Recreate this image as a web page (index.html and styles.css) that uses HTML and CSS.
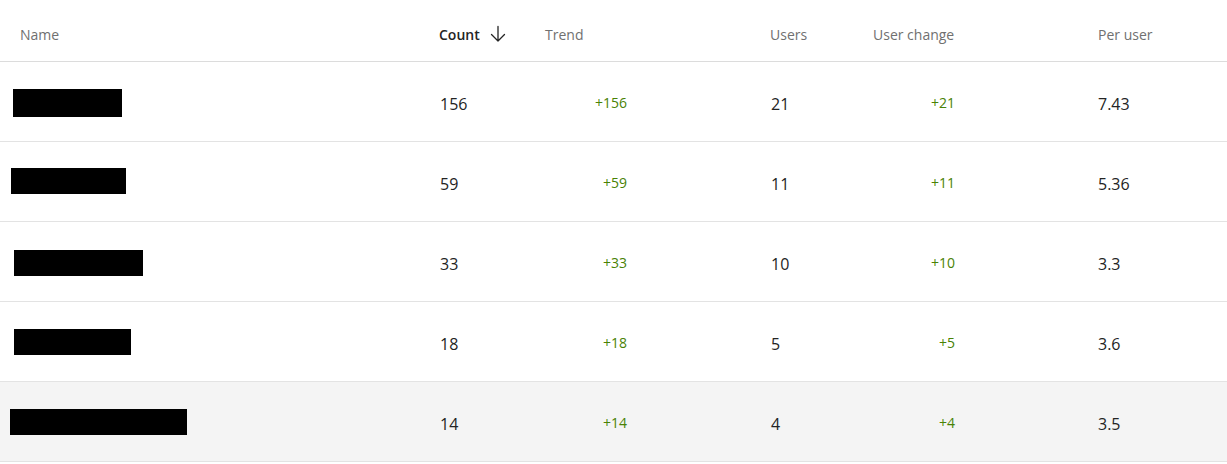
FILE: index.html
```html
<!DOCTYPE html>
<html>
<head>
<meta charset="utf-8">
<link rel="stylesheet" href="styles.css">
</head>
<body>
<div class="table">
  <div class="row header">
    <div class="cell name"><span class="hname">Name</span></div>
    <div class="cell count"><span class="sorted">Count</span>
      <svg class="arrow" width="18" height="18" viewBox="0 0 18 18"><path d="M9 1.5V16M2.5 9.5L9 16l6.5-6.5" fill="none" stroke="#242424" stroke-width="1.3" stroke-linecap="round" stroke-linejoin="round"/></svg>
    </div>
    <div class="cell trend">Trend</div>
    <div class="cell users">Users</div>
    <div class="cell uchange">User change</div>
    <div class="cell per">Per user</div>
  </div>

  <div class="row">
    <div class="cell name"><span class="redact" style="width:109px;height:28px;margin-left:13px"></span></div>
    <div class="cell count">156</div>
    <div class="cell trend"><span class="delta">+156</span></div>
    <div class="cell users">21</div>
    <div class="cell uchange"><span class="delta">+21</span></div>
    <div class="cell per">7.43</div>
  </div>
  <div class="row">
    <div class="cell name"><span class="redact" style="width:115px;margin-left:11px;margin-top:-1px"></span></div>
    <div class="cell count">59</div>
    <div class="cell trend"><span class="delta">+59</span></div>
    <div class="cell users">11</div>
    <div class="cell uchange"><span class="delta">+11</span></div>
    <div class="cell per">5.36</div>
  </div>
  <div class="row">
    <div class="cell name"><span class="redact" style="width:129px;margin-left:14px;margin-top:1px"></span></div>
    <div class="cell count">33</div>
    <div class="cell trend"><span class="delta">+33</span></div>
    <div class="cell users">10</div>
    <div class="cell uchange"><span class="delta">+10</span></div>
    <div class="cell per">3.3</div>
  </div>
  <div class="row">
    <div class="cell name"><span class="redact" style="width:117px;margin-left:14px"></span></div>
    <div class="cell count">18</div>
    <div class="cell trend"><span class="delta">+18</span></div>
    <div class="cell users">5</div>
    <div class="cell uchange"><span class="delta">+5</span></div>
    <div class="cell per">3.6</div>
  </div>
  <div class="row hover">
    <div class="cell name"><span class="redact" style="width:177px;margin-left:10px"></span></div>
    <div class="cell count">14</div>
    <div class="cell trend"><span class="delta">+14</span></div>
    <div class="cell users">4</div>
    <div class="cell uchange"><span class="delta">+4</span></div>
    <div class="cell per">3.5</div>
  </div>
</div>
</body>
</html>
```

FILE: styles.css
```css
html, body {
  margin: 0;
  padding: 0;
  background: #ffffff;
}
* {
  box-sizing: border-box;
}
body {
  font-family: "Segoe UI", "Open Sans", "Noto Sans", sans-serif;
  color: #242424;
  width: 1227px;
  height: 464px;
  overflow: hidden;
}
.table {
  display: flex;
  flex-direction: column;
}
.row {
  display: grid;
  grid-template-columns: 439px 106px 225px 103px 225px 1fr;
  height: 80px;
  border-bottom: 1px solid #e3e3e3;
  align-items: center;
  font-size: 16px;
}
.row.header {
  height: 62px;
  font-size: 14px;
  color: #707070;
  border-bottom: 1px solid #dcdcdc;
  padding-top: 7px;
}
.row.hover {
  background: #f4f4f4;
}
.cell {
  display: flex;
  align-items: center;
  white-space: nowrap;
}
.row:not(.header) .name {
  align-self: start;
  padding-top: 27px;
}
.hname {
  padding-left: 20px;
}
.sorted {
  color: #242424;
  font-weight: 600;
}
.arrow {
  margin-left: 9px;
}
.row:not(.header) .count,
.row:not(.header) .users {
  padding-left: 1px;
  padding-top: 4px;
}
.row:not(.header) .per {
  padding-top: 4px;
}
.row:not(.header) .trend,
.row:not(.header) .uchange {
  padding-top: 1px;
}
.trend .delta,
.uchange .delta {
  width: 82px;
  text-align: right;
}
.delta {
  color: #498205;
  font-size: 14px;
  font-weight: 500;
}
.redact {
  display: block;
  height: 26px;
  background: #000;
}
```
